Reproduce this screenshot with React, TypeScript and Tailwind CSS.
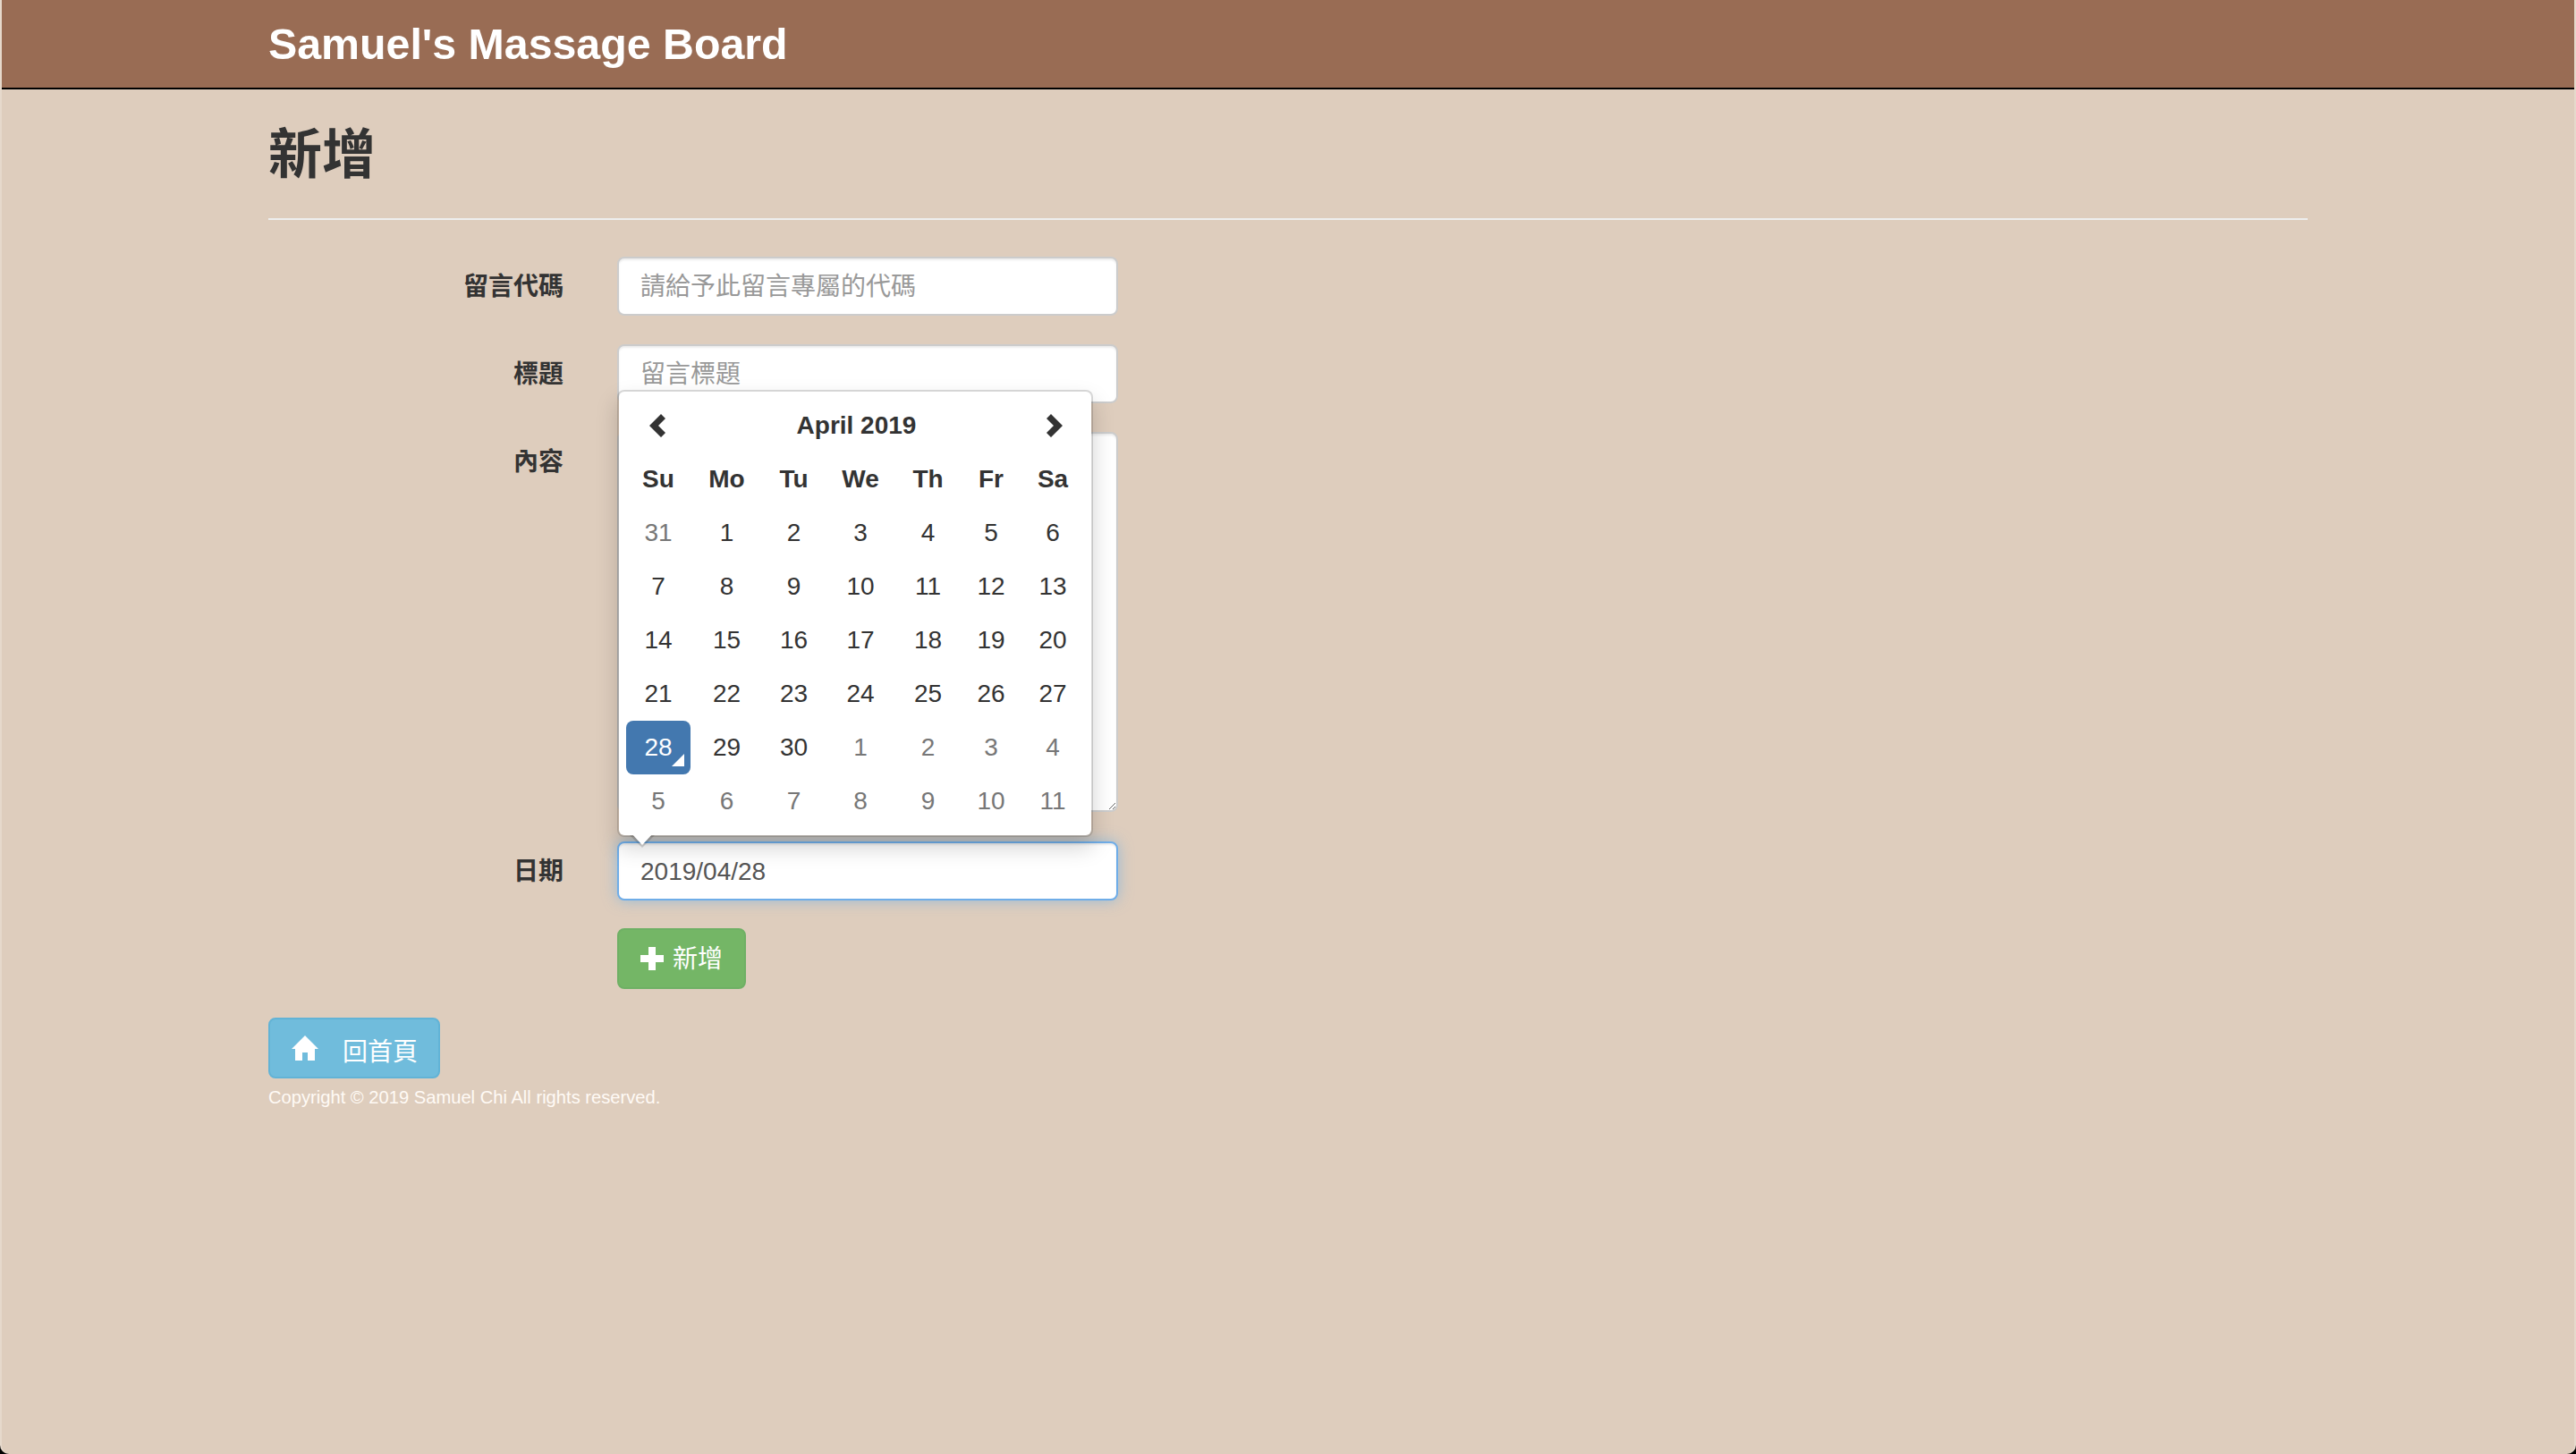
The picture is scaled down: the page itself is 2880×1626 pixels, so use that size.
import { ReactNode } from "react"

const weekDays = ["Su", "Mo", "Tu", "We", "Th", "Fr", "Sa"]

// [day, muted]
const days: [number, boolean][] = [
	[31, true], [1, false], [2, false], [3, false], [4, false], [5, false], [6, false],
	[7, false], [8, false], [9, false], [10, false], [11, false], [12, false], [13, false],
	[14, false], [15, false], [16, false], [17, false], [18, false], [19, false], [20, false],
	[21, false], [22, false], [23, false], [24, false], [25, false], [26, false], [27, false],
	[28, false], [29, false], [30, false], [1, true], [2, true], [3, true], [4, true],
	[5, true], [6, true], [7, true], [8, true], [9, true], [10, true], [11, true],
]

const inputClass =
	"block w-[560px] rounded-[8px] border-2 bg-white px-[24px] text-[28px] text-[#555] outline-none placeholder:text-[#999]"
const idleClass = "border-[#ccc] shadow-[inset_0_2px_2px_rgba(0,0,0,0.075)]"

function Row({ label, children, className }: { label: string; children: ReactNode; className: string }) {
	return (
		<div className={`flex ${className}`}>
			<label className="mr-[60px] w-[330px] pt-[14px] text-right text-[28px] leading-[40px] font-bold text-[#333]">
				{label}
			</label>
			{children}
		</div>
	)
}

function Chevron({ right }: { right?: boolean }) {
	return (
		<svg
			width="18"
			height="26"
			viewBox="0 0 18 26"
			className={right ? "ml-[3px]" : "mr-[3px] -scale-x-100"}
		>
			<path d="M5 0 L18 13 L5 26 L0 21 L8 13 L0 5 Z" fill="#333" />
		</svg>
	)
}

function Calendar() {
	return (
		<div className="absolute bottom-[71px] left-0 z-10 w-[532px] rounded-[8px] border-2 border-[rgba(0,0,0,0.15)] bg-white bg-clip-padding p-[8px] text-[28px] text-[#333] shadow-[0_12px_24px_rgba(0,0,0,0.175)]">
			<div className="grid grid-cols-[72px_81px_69px_80px_71px_70px_68px] auto-rows-[60px] items-center text-center">
				<div className="flex justify-center">
					<Chevron />
				</div>
				<div className="col-span-5 font-bold">April 2019</div>
				<div className="flex justify-center">
					<Chevron right />
				</div>
				{weekDays.map((day) => (
					<div key={day} className="font-bold">
						{day}
					</div>
				))}
				{days.map(([day, muted], i) =>
					i === 28 ? (
						<div
							key={i}
							className="relative flex h-[60px] items-center justify-center rounded-[8px] bg-[#4378af] text-white"
						>
							{day}
							<span className="absolute right-[7px] bottom-[9px] border-b-[14px] border-l-[14px] border-b-white border-l-transparent" />
						</div>
					) : (
						<div key={i} className={muted ? "text-[#777]" : ""}>
							{day}
						</div>
					),
				)}
			</div>
			<span className="absolute top-full left-[12px] border-x-[14px] border-t-[14px] border-x-transparent border-t-[rgba(0,0,0,0.15)]" />
			<span className="absolute top-full left-[14px] -mt-[2px] border-x-[12px] border-t-[13px] border-x-transparent border-t-white" />
		</div>
	)
}

export default function App() {
	return (
		<div className="h-[1626px] bg-black font-['Liberation_Sans','Noto_Sans_CJK_TC',sans-serif]">
			<div className="h-full overflow-hidden rounded-b-[10px] border-x-2 border-x-[#e6d9cc] bg-[#decdbd]">
				<nav className="-mx-[2px] h-[100px] border-x-2 border-b-2 border-x-[#b39684] border-b-black bg-[#996c54]">
					<div className="mx-auto w-[2280px] text-[48.3px] leading-[98px] font-bold text-white">
						Samuel's Massage Board
					</div>
				</nav>

				<main className="mx-auto w-[2280px]">
					<h2 className="mt-[41px] text-[60px] leading-[66px] font-bold text-[#333]">新增</h2>
					<hr className="mt-[37px] mb-[41px] border-t-2 border-[#eee]" />

					<form>
						<Row label="留言代碼" className="mb-[32px]">
							<input className={`${inputClass} ${idleClass} h-[66px] pt-[2px]`} placeholder="請給予此留言專屬的代碼" />
						</Row>
						<Row label="標題" className="mb-[32px]">
							<input className={`${inputClass} ${idleClass} h-[66px] pt-[2px]`} placeholder="留言標題" />
						</Row>
						<Row label="內容" className="mb-[33px]">
							<textarea className={`${inputClass} ${idleClass} h-[425px] resize-y`} />
						</Row>
						<Row label="日期" className="mb-[31px]">
							<div className="relative">
								<input
									className={`${inputClass} h-[66px] border-[#6fade8] pt-[1px] shadow-[inset_0_2px_2px_rgba(0,0,0,0.075),0_0_16px_rgba(102,175,233,0.6)]`}
									defaultValue="2019/04/28"
								/>
								<Calendar />
							</div>
						</Row>
						<div className="mb-[32px] ml-[390px]">
							<button
								type="button"
								className="flex h-[68px] w-[144px] items-center rounded-[8px] border-2 border-[#6fb065] bg-[#74b666] pl-[23px] text-[28px] text-white"
							>
								<svg width="28" height="28" viewBox="0 0 28 28" className="mr-[9px]">
									<path d="M10 1 H18 V10 H27 V18 H18 V27 H10 V18 H1 V10 H10 Z" fill="white" />
								</svg>
								<span className="mt-[2px]">新增</span>
							</button>
						</div>
					</form>

					<button
						type="button"
						className="flex h-[68px] w-[192px] items-center rounded-[8px] border-2 border-[#62b3d6] bg-[#70bcdc] pl-[24px] text-[28px] text-white"
					>
						<svg width="30" height="30" viewBox="0 0 30 30" className="mr-[27px]">
							<path d="M15 1 L30 16 L26 16 L26 29 L18 29 L18 20 L12 20 L12 29 L4 29 L4 16 L0 16 Z" fill="white" />
						</svg>
						<span className="mt-[10px]">回首頁</span>
					</button>
					<p className="mt-[7px] text-[20.17px] leading-[28px] text-[#fffaf5]">
						Copyright © 2019 Samuel Chi All rights reserved.
					</p>
				</main>
			</div>
		</div>
	)
}
